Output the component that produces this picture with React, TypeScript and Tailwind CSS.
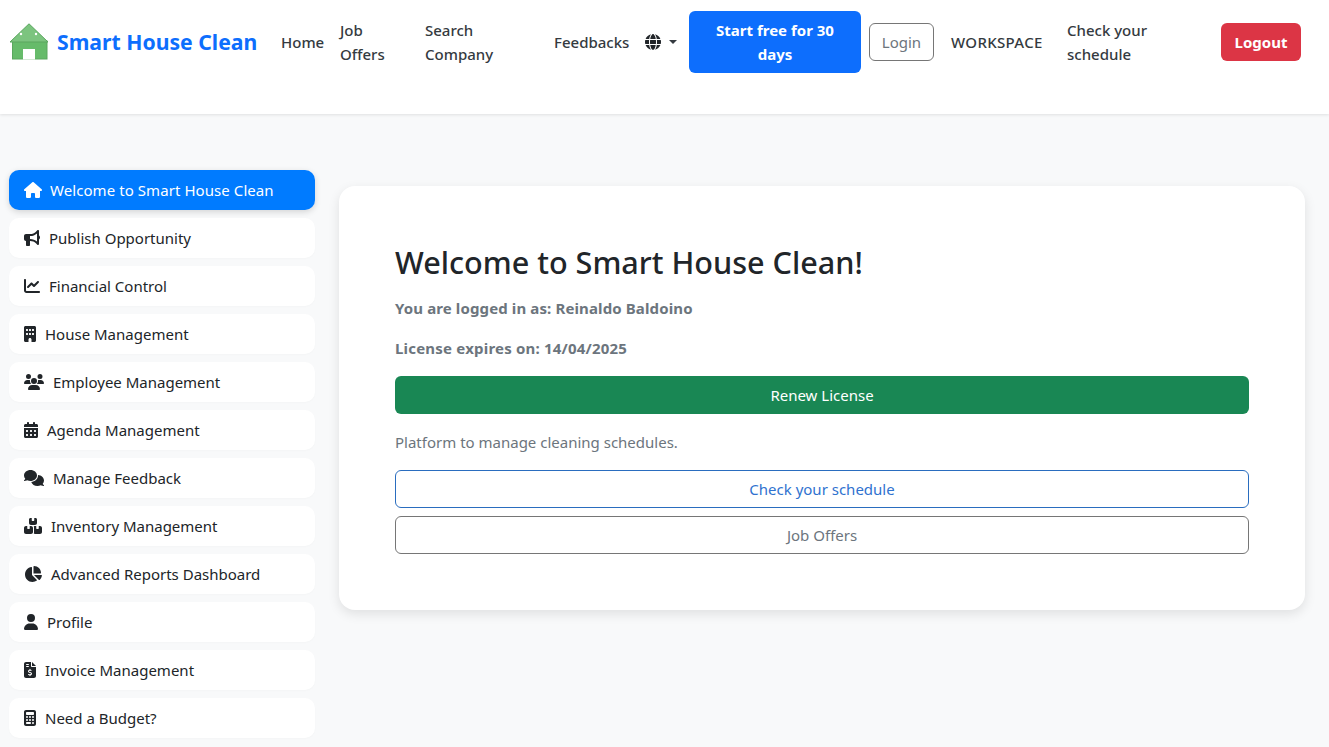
import React from 'react';
import {
  FaHouse, FaBullhorn, FaChartLine, FaBuilding, FaUsers, FaCalendarDays, FaComments,
  FaBoxesStacked, FaChartPie, FaUser, FaFileInvoiceDollar, FaCalculator, FaGlobe,
} from 'react-icons/fa6';

const menu = [
  { label: 'Publish Opportunity', icon: FaBullhorn, w: 'w-4' },
  { label: 'Financial Control', icon: FaChartLine, w: 'w-4' },
  { label: 'House Management', icon: FaBuilding, w: 'w-3' },
  { label: 'Employee Management', icon: FaUsers, w: 'w-5' },
  { label: 'Agenda Management', icon: FaCalendarDays, w: 'w-3.5' },
  { label: 'Manage Feedback', icon: FaComments, w: 'w-5' },
  { label: 'Inventory Management', icon: FaBoxesStacked, w: 'w-[18px]' },
  { label: 'Advanced Reports Dashboard', icon: FaChartPie, w: 'w-[18px]' },
  { label: 'Profile', icon: FaUser, w: 'w-3.5' },
  { label: 'Invoice Management', icon: FaFileInvoiceDollar, w: 'w-3' },
  { label: 'Need a Budget?', icon: FaCalculator, w: 'w-3' },
];

const Logo = () => (
  <svg width="40" height="38" viewBox="0 0 40 38" className="shrink-0">
    <rect x="3.5" y="18" width="34.5" height="18" fill="#66bb6a" stroke="#5aa75e" />
    <path d="M20 0.8 L39 19 L1 19 Z" fill="#7cc47f" stroke="#5aa75e" strokeLinejoin="round" />
    <rect x="14" y="26" width="12" height="10.5" fill="#fff" />
    <circle cx="12" cy="11" r="1.2" fill="#fff" />
    <circle cx="27" cy="11" r="1.2" fill="#fff" />
  </svg>
);

export default function App() {
  return (
    <div className="min-h-[747px] bg-[#f8f9fa] font-['Noto_Sans','Open_Sans',sans-serif] text-[15px] text-[#212529]">
      <header className="flex h-[114px] items-start bg-white pl-[9px] pt-[11px] shadow-[0_1px_3px_rgba(0,0,0,0.1)]">
        <div className="flex h-[62px] w-[272px] shrink-0 items-center">
          <Logo />
          <span className="ml-2 text-[21.2px] font-bold text-[#0d6efd]">Smart House Clean</span>
        </div>
        <nav className="flex h-[62px] items-center text-[15px] font-medium leading-6 text-[#343a40]">
          <a className="w-[59px]">Home</a>
          <a className="w-[85px]">Job<br />Offers</a>
          <a className="w-[129px]">Search<br />Company</a>
          <a className="w-[91px]">Feedbacks</a>
          <a className="flex w-[44px] items-center">
            <FaGlobe size={16} className="text-[#212529]" />
            <span className="ml-2 h-0 w-0 border-x-4 border-t-4 border-x-transparent border-t-[#343a40]" />
          </a>
          <button className="h-[62px] w-[172px] rounded-md bg-[#0d6efd] px-3 font-bold leading-6 text-white">Start free for 30 days</button>
          <button className="ml-2 h-[38px] w-[65px] rounded-md border border-[#767676] font-normal text-[#6c757d]">Login</button>
          <a className="ml-[17px] w-[116px] tracking-[0.33px]">WORKSPACE</a>
          <a className="w-[154px]">Check your<br />schedule</a>
          <button className="h-[38px] w-[80px] rounded-md bg-[#dc3545] font-bold text-white">Logout</button>
        </nav>
      </header>

      <div className="flex items-start pl-[9px]">
        <aside className="mt-[56px] flex w-[306px] shrink-0 flex-col gap-2">
          <a className="flex h-10 items-center rounded-[10px] bg-[#007bff] pl-[15px] tracking-[0.07px] text-white shadow-[0_2px_6px_rgba(0,0,0,0.15)]">
            <FaHouse className="mr-2 h-4 w-[18px] shrink-0" />
            Welcome to Smart House Clean
          </a>
          {menu.map(({ label, icon: Icon, w }) => (
            <a key={label} className="flex h-10 items-center rounded-[10px] bg-white pl-[15px] shadow-[0_1px_2px_rgba(0,0,0,0.02)]">
              <Icon className={`mr-[9px] h-4 shrink-0 ${w}`} />
              {label}
            </a>
          ))}
        </aside>

        <main className="ml-6 mt-[72px] w-[966px] rounded-2xl bg-white p-14 shadow-[0_4px_12px_rgba(0,0,0,0.1)]">
          <h1 className="text-[30.6px] font-medium leading-[40px]">Welcome to Smart House Clean!</h1>
          <p className="mt-[14px] font-bold leading-6 tracking-[0.12px] text-[#6c757d]">You are logged in as: Reinaldo Baldoino</p>
          <p className="mt-4 font-bold leading-6 tracking-[0.2px] text-[#6c757d]">License expires on: 14/04/2025</p>
          <button className="mt-4 h-[38px] w-full rounded-md bg-[#198754] text-white">Renew License</button>
          <p className="mt-4 leading-6 text-[#6c757d]">Platform to manage cleaning schedules.</p>
          <button className="mt-4 h-[38px] w-full rounded-md border border-[#2a6dbf] text-[#2f72cf]">Check your schedule</button>
          <button className="mt-2 h-[38px] w-full rounded-md border border-[#767676] text-[#6c757d]">Job Offers</button>
        </main>
      </div>
    </div>
  );
}
